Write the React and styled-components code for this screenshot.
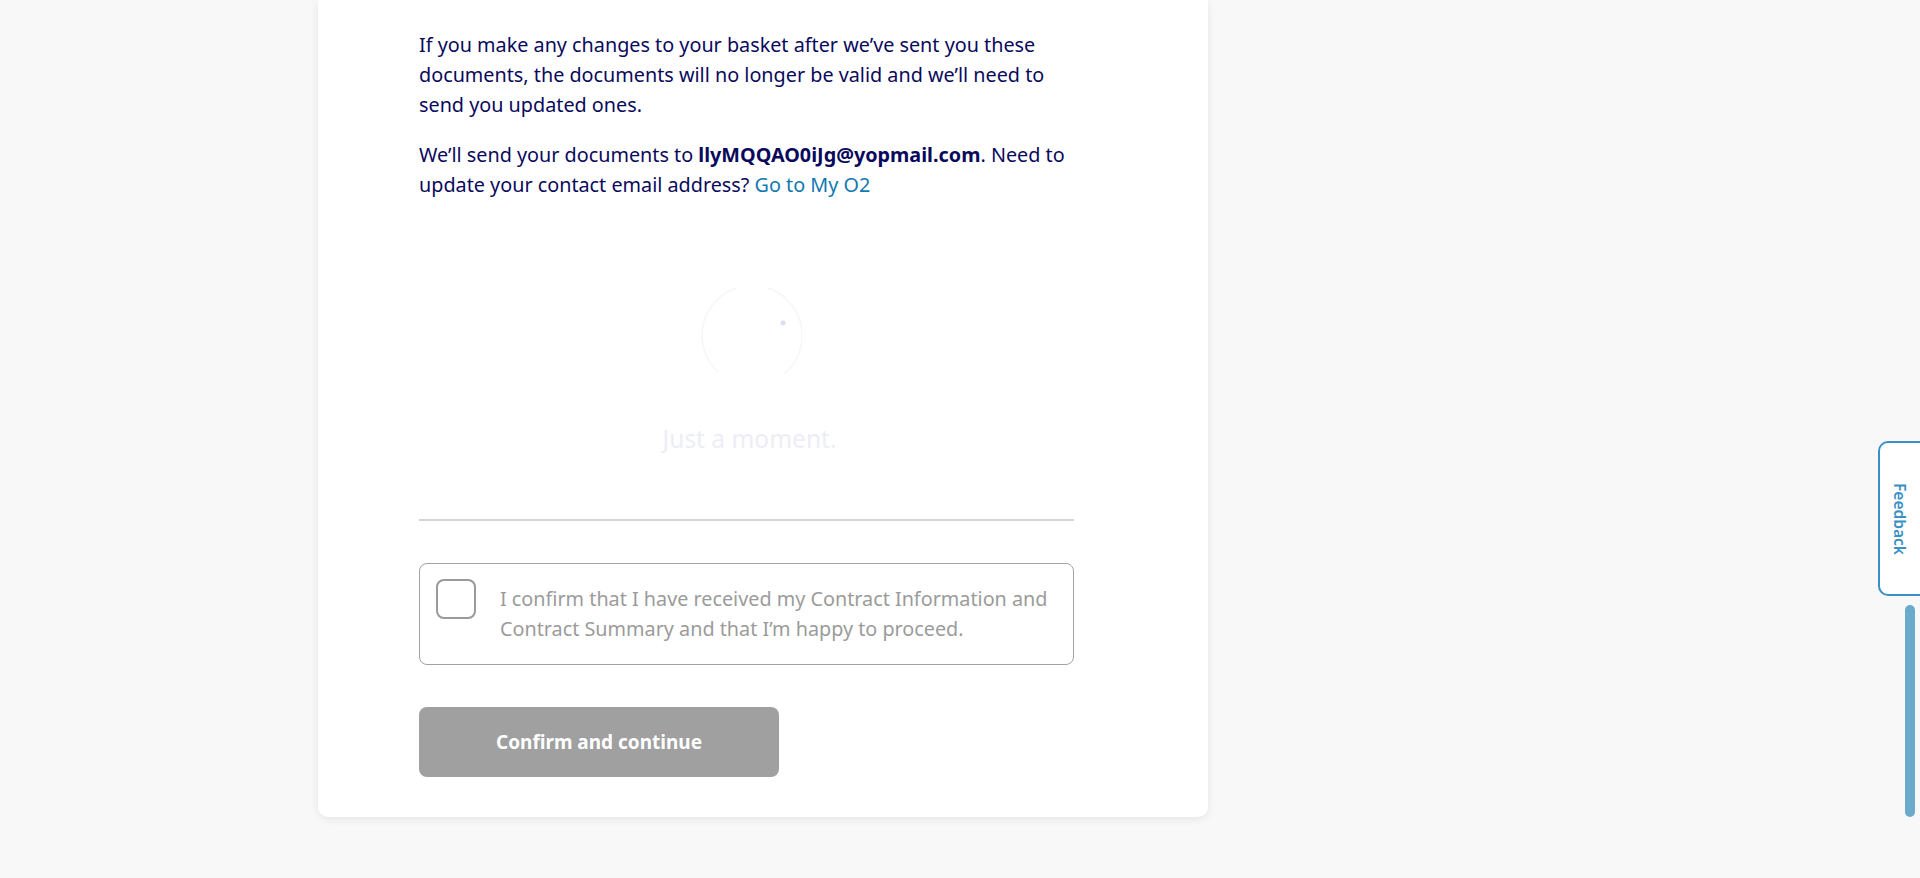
import React from "react";
import styled, { createGlobalStyle } from "styled-components";

const Global = createGlobalStyle`
  html, body { margin: 0; padding: 0; background: #f8f8f8; }
  body { font-family: "Noto Sans", "Open Sans", sans-serif; overflow: hidden; }
  * { box-sizing: border-box; }
`;

const Page = styled.div`
  min-height: 878px;
  padding-left: 318px;
`;

const Card = styled.section`
  width: 890px;
  background: #fff;
  border-radius: 0 0 10px 10px;
  box-shadow: 0 2px 8px rgba(0, 0, 0, 0.08);
  padding: 30px 0 40px 101px;
`;

const Column = styled.div`
  width: 655px;
  display: flex;
  flex-direction: column;
`;

const Para = styled.p`
  margin: 0 0 ${(p) => p.$gap || 0}px;
  font-size: 19.8px;
  line-height: 30px;
  color: #0a0a5c;
`;

const Strong = styled.strong`
  font-weight: 700;
`;

const Link = styled.a`
  color: #1278b0;
  text-decoration: none;
`;

const Loader = styled.div`
  display: flex;
  flex-direction: column;
  align-items: center;
  padding: 88px 0 65px 6px;
`;

const LoaderText = styled.div`
  margin-top: 32px;
  font-size: 24.5px;
  line-height: 30px;
  color: #ededf6;
`;

const Divider = styled.hr`
  margin: 0;
  border: none;
  height: 2px;
  background: #d4d4d4;
`;

const ConfirmBox = styled.label`
  margin-top: 42px;
  display: flex;
  align-items: flex-start;
  gap: 24px;
  border: 1px solid #a3a3a3;
  border-radius: 8px;
  padding: 15px 16px 20px 16px;
`;

const Check = styled.span`
  flex: 0 0 40px;
  width: 40px;
  height: 40px;
  border: 2px solid #9a9a9a;
  border-radius: 8px;
  background: #fff;
`;

const ConfirmText = styled.span`
  margin-top: 5px;
  font-size: 19.8px;
  line-height: 30px;
  color: #9b9b9b;
`;

const Button = styled.button`
  margin-top: 42px;
  width: 360px;
  height: 70px;
  border: none;
  border-radius: 8px;
  background: #a0a0a0;
  color: #fff;
  font-family: inherit;
  font-size: 19px;
  font-weight: 700;
  cursor: not-allowed;
`;

const Feedback = styled.div`
  position: fixed;
  right: 0;
  top: 441px;
  width: 42px;
  height: 155px;
  background: #fff;
  border: 2px solid #3a8fc4;
  border-right: none;
  border-radius: 10px 0 0 10px;
  display: flex;
  align-items: center;
  justify-content: center;
`;

const FeedbackText = styled.span`
  writing-mode: vertical-rl;
  font-size: 15.5px;
  font-weight: 600;
  color: #3a8fc4;
`;

const ScrollThumb = styled.div`
  position: fixed;
  left: 1905px;
  top: 605px;
  width: 10px;
  height: 212px;
  border-radius: 5px;
  background: #6aabcc;
`;

function Spinner() {
  return (
    <svg width="104" height="104" viewBox="0 0 104 104" aria-hidden="true">
      <path
        d="M 20 84 A 50 50 0 1 1 86 86"
        fill="none"
        stroke="#f6f6f9"
        strokeWidth="1.5"
      />
      <circle cx="85" cy="35" r="2.5" fill="#dcdcf2" />
    </svg>
  );
}

export default function App() {
  return (
    <>
      <Global />
      <Page>
        <Card>
          <Column>
            <Para $gap={20}>
              If you make any changes to your basket after we’ve sent you these
              documents, the documents will no longer be valid and we’ll need to
              send you updated ones.
            </Para>
            <Para>
              We’ll send your documents to <Strong>llyMQQAO0iJg@yopmail.com</Strong>.
              Need to update your contact email address?{" "}
              <Link href="#">Go to My O2</Link>
            </Para>
            <Loader>
              <Spinner />
              <LoaderText>Just a moment.</LoaderText>
            </Loader>
            <Divider />
            <ConfirmBox>
              <Check />
              <ConfirmText>
                I confirm that I have received my Contract Information and
                Contract Summary and that I’m happy to proceed.
              </ConfirmText>
            </ConfirmBox>
            <Button type="button">Confirm and continue</Button>
          </Column>
        </Card>
      </Page>
      <Feedback>
        <FeedbackText>Feedback</FeedbackText>
      </Feedback>
      <ScrollThumb />
    </>
  );
}
